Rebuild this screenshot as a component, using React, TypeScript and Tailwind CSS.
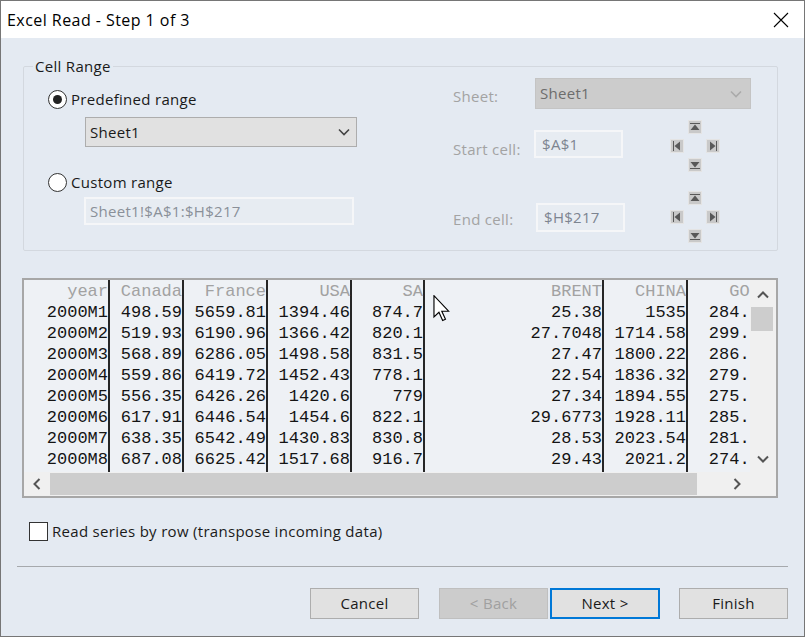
import React from "react";

const columns = [
  { name: "year", w: "w-[86px]", values: ["2000M1", "2000M2", "2000M3", "2000M4", "2000M5", "2000M6", "2000M7", "2000M8"] },
  { name: "Canada", w: "w-[74px]", values: ["498.59", "519.93", "568.89", "559.86", "556.35", "617.91", "638.35", "687.08"] },
  { name: "France", w: "w-[84px]", values: ["5659.81", "6190.96", "6286.05", "6419.72", "6426.26", "6446.54", "6542.49", "6625.42"] },
  { name: "USA", w: "w-[84px]", values: ["1394.46", "1366.42", "1498.58", "1452.43", "1420.6", "1454.6", "1430.83", "1517.68"] },
  { name: "SA", w: "w-[73px]", values: ["874.7", "820.1", "831.5", "778.1", "779", "822.1", "830.8", "916.7"] },
  { name: "BRENT", w: "w-[179px]", values: ["25.38", "27.7048", "27.47", "22.54", "27.34", "29.6773", "28.53", "29.43"] },
  { name: "CHINA", w: "w-[84px]", values: ["1535", "1714.58", "1800.22", "1836.32", "1894.55", "1928.11", "2023.54", "2021.2"] },
  { name: "GOLD", w: "w-[82px]", values: ["284.32", "299.10", "286.39", "279.69", "275.19", "285.73", "281.59", "274.47"] },
];

function Chevron({ dir, color = "#333", weight = 1.6 }: { dir: "up" | "down" | "left" | "right"; color?: string; weight?: number }) {
  const d = {
    down: "M1 1.5 L6 6.5 L11 1.5",
    up: "M1 6.5 L6 1.5 L11 6.5",
    left: "M6.5 1 L1.5 6 L6.5 11",
    right: "M1.5 1 L6.5 6 L1.5 11",
  }[dir];
  const vertical = dir === "up" || dir === "down";
  return (
    <svg width={vertical ? 12 : 8} height={vertical ? 8 : 12} viewBox={vertical ? "0 0 12 8" : "0 0 8 12"}>
      <path d={d} fill="none" stroke={color} strokeWidth={weight} />
    </svg>
  );
}

function ArrowBtn({ dir }: { dir: "up" | "down" | "left" | "right" }) {
  const shape = {
    up: "M2 3h10v1H2z M7 4.5 L11.5 10 L2.5 10 Z",
    down: "M2 10h10v1H2z M7 9.5 L11.5 4 L2.5 4 Z",
    left: "M3 2h1v10H3z M4.5 7 L10 2.5 L10 11.5 Z",
    right: "M10 2h1v10h-1z M9.5 7 L4 2.5 L4 11.5 Z",
  }[dir];
  return (
    <div className="w-[14px] h-[14px] bg-[#c9c9c9] border border-[#e4e4e4] flex items-center justify-center">
      <svg width="12" height="12" viewBox="1 1 12 12">
        <path d={shape} fill="#585858" />
      </svg>
    </div>
  );
}

function Pad({ className }: { className: string }) {
  return (
    <div className={`grid grid-cols-[14px_14px_14px] grid-rows-[14px_14px_14px] gap-x-[4px] gap-y-[5px] ${className}`}>
      <div />
      <ArrowBtn dir="up" />
      <div />
      <ArrowBtn dir="left" />
      <div />
      <ArrowBtn dir="right" />
      <div />
      <ArrowBtn dir="down" />
      <div />
    </div>
  );
}

function Radio({ checked }: { checked?: boolean }) {
  return (
    <div className="w-[19px] h-[19px] rounded-full border border-[#333] bg-white flex items-center justify-center">
      {checked && <div className="w-[9px] h-[9px] rounded-full bg-[#222]" />}
    </div>
  );
}

export default function App() {
  return (
    <div className="w-[805px] h-[637px] border border-[#767676] flex flex-col bg-[#e4eaf2] font-['Open_Sans',sans-serif] text-[15px] tracking-[0.3px] text-[#1a1a1a] overflow-hidden">
      <div className="h-[37px] shrink-0 bg-white flex items-center justify-between">
        <span className="ml-[6px] text-[16px] tracking-[0.45px] text-black">Excel Read - Step 1 of 3</span>
        <svg className="mr-[15px]" width="16" height="16" viewBox="0 0 16 16">
          <path d="M1 1L15 15M15 1L1 15" stroke="#000" strokeWidth="1.1" fill="none" />
        </svg>
      </div>

      <fieldset className="mt-[18px] ml-[22px] w-[755px] h-[195px] border border-[#d3d8df] rounded-[2px]">
        <legend className="ml-[9px] px-[2px] leading-[20px]">Cell Range</legend>
        <div className="flex">
          <div className="w-[429px] pl-[24px] pt-[13px]">
            <div className="flex items-center gap-[4px] h-[20px]">
              <Radio checked />
              <span>Predefined range</span>
            </div>
            <div className="mt-[8px] ml-[37px] w-[272px] h-[30px] bg-[#e1e1e1] border border-[#adadad] flex items-center justify-between pl-[4px] pr-[6px]">
              <span>Sheet1</span>
              <Chevron dir="down" color="#444" />
            </div>
            <div className="mt-[25px] flex items-center gap-[4px] h-[20px]">
              <Radio />
              <span>Custom range</span>
            </div>
            <div className="mt-[5px] ml-[36px] w-[270px] h-[28px] bg-[#e7ecf2] border-2 border-[#f5f6f8] flex items-center pl-[4px] text-[#8a9099]">
              Sheet1!$A$1:$H$217
            </div>
          </div>

          <div className="flex flex-col">
            <div className="mt-[2px] flex h-[31px]">
              <span className="w-[82px] mt-[8px] leading-[20px] text-[#a3a3a3]">Sheet:</span>
              <div className="w-[216px] h-[31px] bg-[#cccccc] border border-[#c4c4c4] flex items-center justify-between pl-[4px] pr-[8px] text-[#6d6d6d]">
                <span>Sheet1</span>
                <Chevron dir="down" color="#aaa" />
              </div>
            </div>
            <div className="mt-[11px] flex h-[51px]">
              <span className="w-[81px] mt-[19px] leading-[20px] text-[#a3a3a3]">Start cell:</span>
              <div className="mt-[10px] w-[89px] h-[28px] bg-[#e7ecf2] border-2 border-[#f5f6f8] flex items-center pl-[6px] text-[#7d8490]">
                $A$1
              </div>
              <Pad className="ml-[47px]" />
            </div>
            <div className="mt-[20px] flex h-[51px]">
              <span className="w-[83px] mt-[18px] leading-[20px] text-[#a3a3a3]">End cell:</span>
              <div className="mt-[12px] w-[89px] h-[29px] bg-[#e7ecf2] border-2 border-[#f5f6f8] flex items-center pl-[6px] text-[#7d8490]">
                $H$217
              </div>
              <Pad className="ml-[45px]" />
            </div>
          </div>
        </div>
      </fieldset>

      <div className="relative mt-[27px] ml-[21px] w-[756px] h-[220px] border-2 border-[#a7a7a7] flex">
        <div className="w-[726px] flex flex-col">
          <div className="h-[192px] flex overflow-hidden bg-[#eef1f5] font-['Liberation_Mono','Courier_New',monospace] text-[17px] tracking-normal">
            {columns.map((c, i) => (
              <div
                key={c.name}
                className={`${c.w} shrink-0 pt-[1px] text-right ${i < columns.length - 1 ? "border-r-2 border-[#262626]" : ""}`}
              >
                <div className="h-[21px] leading-[21px] text-[#a2a2a2]">{c.name}</div>
                {c.values.map((v, j) => (
                  <div key={j} className="h-[21px] leading-[21px] text-[#141414]">
                    {v}
                  </div>
                ))}
              </div>
            ))}
          </div>
          <div className="h-[24px] bg-[#f0f0f0] flex items-center">
            <div className="w-[26px] flex justify-center">
              <Chevron dir="left" color="#555" weight={2} />
            </div>
            <div className="w-[647px] h-[22px] bg-[#cdcdcd]" />
            <div className="flex-1" />
            <div className="w-[26px] flex justify-center">
              <Chevron dir="right" color="#555" weight={2} />
            </div>
          </div>
        </div>
        <div className="w-[26px] bg-[#f0f0f0] flex flex-col">
          <div className="h-[27px] pt-[3px] flex items-center justify-center">
            <Chevron dir="up" color="#555" weight={2} />
          </div>
          <div className="ml-[1px] w-[22px] h-[24px] bg-[#cdcdcd]" />
          <div className="flex-1" />
          <div className="h-[26px] flex items-center justify-center">
            <Chevron dir="down" color="#555" weight={2} />
          </div>
          <div className="h-[24px]" />
        </div>

        <svg className="absolute left-[409px] top-[15px]" width="19" height="27" viewBox="0 0 13 19">
          <path
            d="M0.5 0.5 L0.5 15.5 L4 12.2 L6.6 18 L8.6 17.1 L6 11.4 L10.8 11.4 Z"
            fill="#fff"
            stroke="#000"
            strokeWidth="0.8"
            strokeLinejoin="miter"
          />
        </svg>
      </div>

      <div className="mt-[24px] ml-[28px] flex items-center gap-[4px] h-[19px]">
        <div className="w-[19px] h-[19px] border border-[#333] bg-white" />
        <span>Read series by row (transpose incoming data)</span>
      </div>

      <div className="mt-[25px] ml-[16px] w-[771px] border-t border-[#a6a9ad]" />

      <div className="mt-[21px] ml-[309px] flex">
        <button className="w-[109px] h-[31px] bg-[#e1e1e1] border border-[#adadad]">Cancel</button>
        <button className="ml-[20px] w-[109px] h-[31px] bg-[#cccccc] border border-[#bfbfbf] text-[#a0a0a0]">&lt; Back</button>
        <button className="ml-[2px] w-[110px] h-[31px] bg-[#e1e1e1] border-2 border-[#0078d7]">Next &gt;</button>
        <button className="ml-[19px] w-[109px] h-[31px] bg-[#e1e1e1] border border-[#adadad]">Finish</button>
      </div>
    </div>
  );
}
